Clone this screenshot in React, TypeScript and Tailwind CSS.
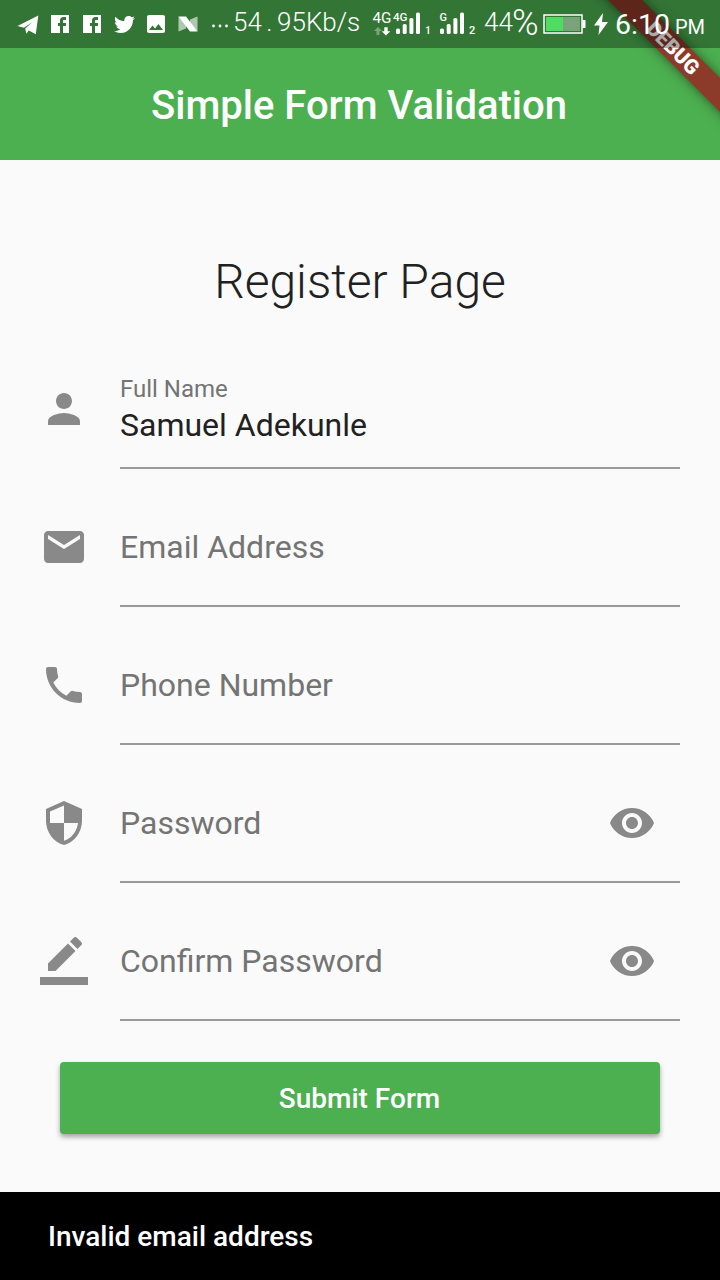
import React, { useState } from "react";
import { FaTwitter } from "react-icons/fa";

const icons = {
  person:
    "M12 12c2.21 0 4-1.79 4-4s-1.79-4-4-4-4 1.79-4 4 1.79 4 4 4zm0 2c-2.67 0-8 1.34-8 4v2h16v-2c0-2.66-5.33-4-8-4z",
  email:
    "M20 4H4c-1.1 0-1.99.9-1.99 2L2 18c0 1.1.9 2 2 2h16c1.1 0 2-.9 2-2V6c0-1.1-.9-2-2-2zm0 4l-8 5-8-5V6l8 5 8-5v2z",
  phone:
    "M6.62 10.79c1.44 2.83 3.76 5.14 6.59 6.59l2.2-2.2c.27-.27.67-.36 1.02-.24 1.12.37 2.33.57 3.57.57.55 0 1 .45 1 1V20c0 .55-.45 1-1 1-9.39 0-17-7.61-17-17 0-.55.45-1 1-1h3.5c.55 0 1 .45 1 1 0 1.25.2 2.45.57 3.57.11.35.03.74-.25 1.02l-2.2 2.2z",
  security:
    "M12 1L3 5v6c0 5.55 3.84 10.74 9 12 5.16-1.26 9-6.45 9-12V5l-9-4zm0 10.99h7c-.53 4.12-3.28 7.79-7 8.94V12H5V6.3l7-3.11v8.8z",
  borderColor:
    "M17.75 7L14 3.25l-10 10V17h3.75l10-10zm2.96-2.96c.39-.39.39-1.02 0-1.41L18.37.29c-.39-.39-1.02-.39-1.41 0L15 2.25 18.75 6l1.96-1.96zM0 20h24v4H0z",
  visibility:
    "M12 4.5C7 4.5 2.73 7.61 1 12c1.73 4.39 6 7.5 11 7.5s9.27-3.11 11-7.5c-1.73-4.39-6-7.5-11-7.5zM12 17c-2.76 0-5-2.24-5-5s2.24-5 5-5 5 2.24 5 5-2.24 5-5 5zm0-8c-1.66 0-3 1.34-3 3s1.34 3 3 3 3-1.34 3-3-1.34-3-3-3z",
  facebook:
    "M3 3h18v18h-6v-7h3v-3h-3V9a1 1 0 0 1 1-1h2V5h-2.5A3.5 3.5 0 0 0 12 8.5V11h-2v3h2v7H3z",
  image:
    "M21 19V5c0-1.1-.9-2-2-2H5c-1.1 0-2 .9-2 2v14c0 1.1.9 2 2 2h14c1.1 0 2-.9 2-2zM8.5 13.5l2.5 3.01L14.5 12l4.5 6H5l3.5-4.5z",
};

type IconName = keyof typeof icons;

const Icon = ({ name, className }: { name: IconName; className?: string }) => (
  <svg viewBox="0 0 24 24" fill="currentColor" className={className}>
    <path d={icons[name]} />
  </svg>
);

const SignalBars = ({ x }: { x: number }) => (
  <g fill="#fff">
    <rect x={x} y="28.5" width="4" height="5.5" rx="1.5" />
    <rect x={x + 6.7} y="24" width="4" height="10" rx="1.5" />
    <rect x={x + 13.4} y="18" width="4" height="16" rx="1.5" />
    <rect x={x + 20} y="12.5" width="4" height="21.5" rx="1.5" />
  </g>
);

// both sims, 372px to 480px on the status bar
const Signals = () => (
  <svg viewBox="372 0 108 48" className="w-[108px] h-12 ml-[13px] shrink-0" fontFamily="Roboto, sans-serif">
    <text x="372.5" y="23" fontSize="15" fill="#fff" textLength="19" lengthAdjust="spacingAndGlyphs">
      4G
    </text>
    <path d="M378 27l4 4h-2.5v4h-3v-4H374z" fill="#fff" opacity="0.35" />
    <path d="M386 35.5l-4.3-4.2h2.6v-4h3.4v4h2.6z" fill="#fff" />
    <text x="393" y="20.5" fontSize="11" fontWeight="500" fill="#fff" textLength="14.5" lengthAdjust="spacingAndGlyphs">
      4G
    </text>
    <SignalBars x={396} />
    <text x="425.5" y="34" fontSize="11" fontWeight="700" fill="#fff" textLength="5" lengthAdjust="spacingAndGlyphs">
      1
    </text>
    <text x="439.5" y="20.5" fontSize="11" fontWeight="500" fill="#fff">
      G
    </text>
    <SignalBars x={440} />
    <text x="469" y="34" fontSize="11" fontWeight="500" fill="#fff">
      2
    </text>
  </svg>
);

const StatusBar = () => {
  return (
    <div className="relative flex items-center h-12 bg-black/[0.33] text-white">
      <svg viewBox="0 0 24 24" fill="currentColor" className="w-6 h-6 ml-4 shrink-0">
        <path d="M1.5 14L22.3 3.5 19.8 22.3l-7-3.8-2.5 3.3-1.1-5.3L16.5 10 8 15.8z" />
      </svg>
      <Icon name="facebook" className="w-6 h-6 ml-2 shrink-0" />
      <Icon name="facebook" className="w-6 h-6 ml-2 shrink-0" />
      <FaTwitter className="w-[21px] h-[21px] ml-[9.5px] shrink-0" />
      <Icon name="image" className="w-6 h-6 ml-[9.5px] shrink-0" />
      <svg viewBox="0 0 20 18" fill="currentColor" className="w-5 h-[18px] ml-[10px] shrink-0">
        <path d="M.5 1.5L8 9v4.5l-7.5 3zM19.5 1.5v15L12 9V4.5z" opacity="0.6" />
        <path d="M.5 1.5H8l11.5 15H12z" />
      </svg>
      <svg viewBox="0 0 18 4" fill="currentColor" className="w-[18px] h-1 mt-1 ml-[13px] shrink-0">
        <circle cx="2.5" cy="2" r="1.4" />
        <circle cx="9" cy="2" r="1.4" />
        <circle cx="15.5" cy="2" r="1.4" />
      </svg>
      <span className="w-[126px] ml-1 -mt-1 shrink-0 whitespace-nowrap text-[26px] leading-none font-light">
        54<span className="mx-[4.5px]">.</span>95Kb/s
      </span>
      <Signals />
      <span className="flex w-[58px] h-12 ml-1 shrink-0 whitespace-nowrap font-light">
        <span className="w-7 pt-[9px] text-[26px] leading-[26px]">44</span>
        <span className="pt-[5px] text-[36px] leading-[36px]">%</span>
      </span>
      <svg viewBox="0 0 44 20" className="w-11 h-5 ml-[1px] shrink-0">
        <rect x="1" y="1" width="38" height="18" fill="none" stroke="#fff" strokeWidth="1.5" />
        <rect x="3" y="3" width="17" height="14" fill="#4fdc63" />
        <rect x="20" y="3" width="17" height="14" fill="#7ba37b" />
        <rect x="39.5" y="6" width="3" height="8" fill="#fff" />
      </svg>
      <svg viewBox="0 0 14 22" fill="currentColor" className="w-[14px] h-[22px] ml-[7px] shrink-0">
        <path d="M9 0L0 12.5h5.5L4.5 22 14 9H8z" />
      </svg>
      <span className="ml-[7px] mt-[3px] flex items-baseline whitespace-nowrap leading-none">
        <span className="w-[60px] text-[28.5px] leading-none">6:10</span>
        <span className="text-[20px] leading-none">PM</span>
      </span>
    </div>
  );
};

const Header = () => {
  return (
    <header className="relative h-40 overflow-hidden bg-[#4caf50]">
      <div className="absolute top-[35.5px] right-[-52.5px] w-[200px] h-6 rotate-45 bg-[#8c3a29] shadow-[0_0_12px_rgba(0,0,0,0.5)] text-center text-[20.4px] leading-6 font-black text-white">
        DEBUG
      </div>
      <StatusBar />
      <h1 className="relative h-28 pr-[2px] text-center text-[40px] leading-[116px] font-medium text-white">
        Simple Form Validation
      </h1>
    </header>
  );
};

type FieldProps = {
  icon: IconName;
  label: string;
  value?: string;
  secret?: boolean;
};

const Field = ({ icon, label, value, secret }: FieldProps) => {
  const [hidden, setHidden] = useState(true);
  return (
    <div className="flex h-[138px] pl-10 pr-10">
      <Icon name={icon} className="w-12 h-12 mt-[54px] mr-8 shrink-0 text-[#898989]" />
      <div className="flex flex-1 border-b-2 border-[#999999]">
        <div className="flex-1">
          {value ? (
            <>
              <p className="mt-[44px] text-[24px] leading-7 text-[#747474]">{label}</p>
              <p className="mt-[3px] text-[32px] leading-[38px] text-[#212121]">{value}</p>
            </>
          ) : (
            <p className="mt-[59px] text-[32px] leading-[38px] text-[#747474]">{label}</p>
          )}
        </div>
        {secret && (
          <button
            type="button"
            aria-pressed={!hidden}
            onClick={() => setHidden(!hidden)}
            className="w-12 h-12 mt-[54px] mr-6 text-[#898989]"
          >
            <Icon name="visibility" className="w-12 h-12" />
          </button>
        )}
      </div>
    </div>
  );
};

const App = () => {
  return (
    <div className="flex flex-col w-[720px] h-[1280px] overflow-hidden bg-[#fafafa] font-[Roboto,sans-serif]">
      <Header />
      <main className="flex-1">
        <h2 className="h-[171px] pt-[94px] text-center text-[48px] leading-[56px] font-light text-[#212121]">
          Register Page
        </h2>
        <form>
          <Field icon="person" label="Full Name" value="Samuel Adekunle" />
          <Field icon="email" label="Email Address" />
          <Field icon="phone" label="Phone Number" />
          <Field icon="security" label="Password" secret />
          <Field icon="borderColor" label="Confirm Password" secret />
          <div className="px-[60px] pt-[41px]">
            <button
              type="button"
              className="block w-full h-[72px] pt-[2px] pr-[1px] rounded bg-[#4caf50] text-[28px] font-medium text-white shadow-[0_3px_5px_rgba(0,0,0,0.35)]"
            >
              Submit Form
            </button>
          </div>
        </form>
      </main>
      <div className="flex items-center h-[88px] px-12 pt-[2px] bg-black text-[28px] font-medium text-white">
        Invalid email address
      </div>
    </div>
  );
};

export default App;
